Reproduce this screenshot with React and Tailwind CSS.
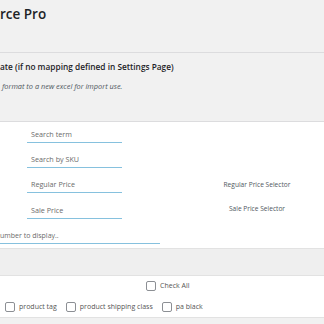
import React from 'react'

function Row({ placeholder, label, h = 'h-[25px]', labelPb = 'pb-[3px]' }) {
  return (
    <div className={`flex items-end ${h}`}>
      <div className="ml-[27px] w-[95px] border-b border-[#86c1de] pb-[2px] pl-[4px] text-[7.2px] leading-[11px] text-[#6b6b6b]">
        {placeholder}
      </div>
      {label && (
        <div className={`ml-[85px] w-[100px] text-center text-[6.6px] leading-[11px] text-[#50575e] ${labelPb}`}>
          {label}
        </div>
      )}
    </div>
  )
}

function Check({ label }) {
  return (
    <label className="flex items-center gap-[4px] text-[7px] leading-[10px] text-[#555]">
      <span className="h-[10px] w-[10px] rounded-[2px] border border-[#8c8f94] bg-white" />
      {label}
    </label>
  )
}

export default function App() {
  return (
    <div className="h-[324px] w-[324px] overflow-hidden bg-[#f1f1f1] font-['Open_Sans',sans-serif] text-[#1d2327]">
      {/* 제목 */}
      <h1 className="h-[28px] text-[13.5px] font-semibold leading-[28px]">rce Pro</h1>

      <div className="mt-[24px] border-t border-[#dcdcde]" />

      <h2 className="pt-[7px] text-[8.3px] font-semibold leading-[14px]">ate (if no mapping defined in Settings Page)</h2>
      <p className="mt-[6px] pl-[2px] text-[7.4px] italic leading-[12px] text-[#50575e]">
        format to a new excel for import use.
      </p>

      {/* 입력 영역 */}
      <div className="mt-[29px] border-t border-[#dcdcde] bg-white pb-[4px]">
        <Row placeholder="Search term" h="h-[21px]" />
        <Row placeholder="Search by SKU" />
        <Row placeholder="Regular Price" label="Regular Price Selector" labelPb="pb-[3px]" />
        <Row placeholder="Sale Price" label="Sale Price Selector" h="h-[26px]" labelPb="pb-[5px]" />
        <div className="flex h-[25px] items-end">
          <div className="w-[160px] border-b border-[#86c1de] pb-[2px] text-[7px] leading-[11px] text-[#6b6b6b]">
            umber to display..
          </div>
        </div>
      </div>

      <div className="h-[28px] border-y border-[#e2e2e2] bg-[#efefef]" />

      {/* 체크박스 */}
      <div className="h-[41px] bg-white">
        <div className="flex pl-[146px] pt-[5px]">
          <Check label="Check All" />
        </div>
        <div className="mt-[11px] flex gap-[9px] pl-[5px]">
          <Check label="product tag" />
          <Check label="product shipping class" />
          <Check label="pa black" />
        </div>
      </div>
      <div className="border-t border-[#e2e2e2]" />
    </div>
  )
}
